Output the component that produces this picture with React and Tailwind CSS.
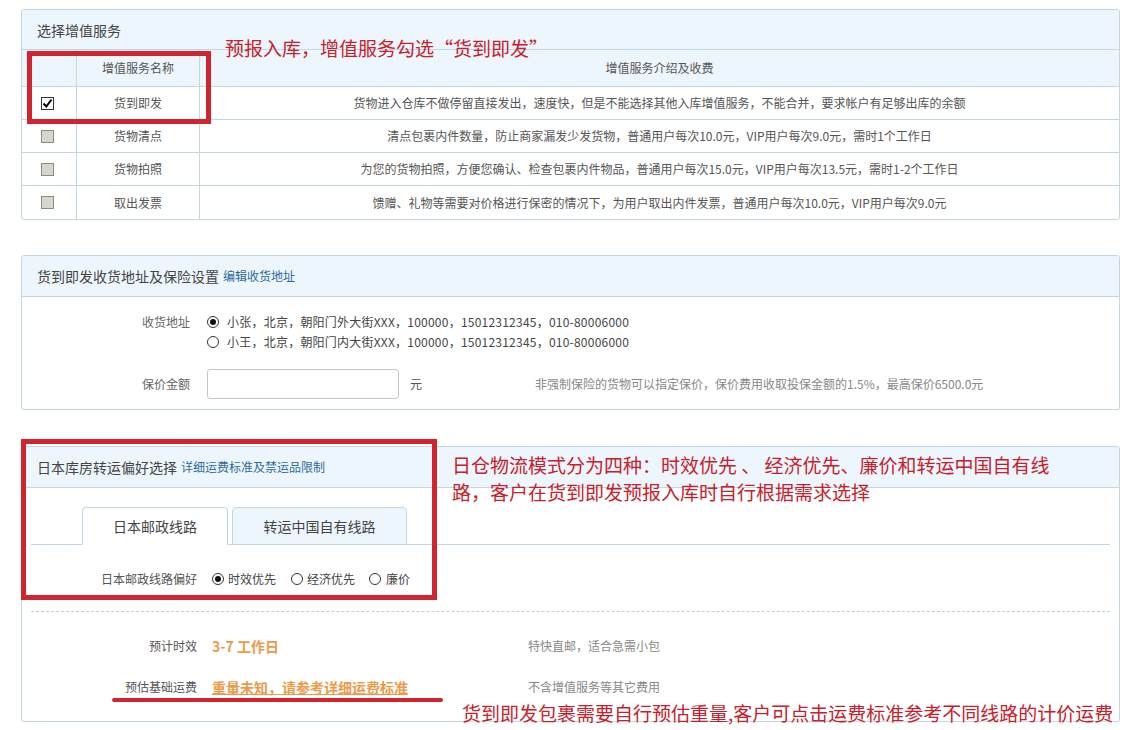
import React from "react";

const services = [
  { name: "货到即发", desc: "货物进入仓库不做停留直接发出，速度快，但是不能选择其他入库增值服务，不能合并，要求帐户有足够出库的余额", checked: true },
  { name: "货物清点", desc: "清点包裹内件数量，防止商家漏发少发货物，普通用户每次10.0元，VIP用户每次9.0元，需时1个工作日" },
  { name: "货物拍照", desc: "为您的货物拍照，方便您确认、检查包裹内件物品，普通用户每次15.0元，VIP用户每次13.5元，需时1-2个工作日" },
  { name: "取出发票", desc: "馈赠、礼物等需要对价格进行保密的情况下，为用户取出内件发票，普通用户每次10.0元，VIP用户每次9.0元" },
];

function Checkbox({ checked }) {
  if (checked) {
    return (
      <span className="flex items-center justify-center w-[13px] h-[13px] border border-[#333] bg-white">
        <svg width="11" height="11" viewBox="0 0 11 11">
          <path d="M1.5 5.5 L4.3 8.5 L9.5 1.5" fill="none" stroke="#000" strokeWidth="2" />
        </svg>
      </span>
    );
  }
  return <span className="block w-[13px] h-[13px] border border-[#8a8a8a] bg-[#d8d5d0]"></span>;
}

function Radio({ checked }) {
  return (
    <span className="flex items-center justify-center w-[12px] h-[12px] rounded-full border border-[#333] bg-white shrink-0">
      {checked && <span className="block w-[6px] h-[6px] rounded-full bg-[#111]"></span>}
    </span>
  );
}

function PanelHeader({ title, link, h }) {
  return (
    <div className={`flex items-center ${h} bg-[#eef6fd] border-b border-[#c3d6e4] pl-[15px]`}>
      <span className="text-[14px] text-[#444]">{title}</span>
      {link && <span className="ml-[4px] text-[12px] text-[#2d6aa0]">{link}</span>}
    </div>
  );
}

export default function App() {
  return (
    <div className="relative w-[1137px] h-[730px] overflow-hidden bg-white font-[family-name:'Noto_Sans_CJK_SC',sans-serif] leading-[20px]">
      <div className="pt-[9px] pl-[21px] w-[1120px]">
        {/* 增值服务 */}
        <div className="border border-[#c3d6e4] rounded-[3px] overflow-hidden">
          <PanelHeader title="选择增值服务" h="h-[40px]" />
          <div className="grid grid-cols-[55px_123px_1fr] h-[37px] bg-[#eef6fd] border-b border-[#c3d6e4] text-[12px] text-[#555]">
            <div className="border-r border-[#c3d6e4]"></div>
            <div className="border-r border-[#c3d6e4] flex items-center justify-center">增值服务名称</div>
            <div className="flex items-center justify-center">增值服务介绍及收费</div>
          </div>
          {services.map((s, i) => (
            <div
              key={i}
              className={`grid grid-cols-[55px_123px_1fr] h-[33px] text-[12px] text-[#555] ${i < services.length - 1 ? "border-b border-[#c3d6e4]" : ""}`}
            >
              <div className="border-r border-[#c3d6e4] flex justify-center pt-[10px] pr-[3px]">
                <Checkbox checked={s.checked} />
              </div>
              <div className="border-r border-[#c3d6e4] flex items-center justify-center">{s.name}</div>
              <div className="flex items-center justify-center">{s.desc}</div>
            </div>
          ))}
        </div>

        {/* 收货地址 */}
        <div className="mt-[35px] border border-[#c3d6e4] rounded-[3px] overflow-hidden">
          <PanelHeader title="货到即发收货地址及保险设置" link="编辑收货地址" h="h-[41px]" />
          <div className="pt-[15px] pb-[10px] text-[12px]">
            <div className="flex">
              <div className="w-[168px] text-right text-[#666]">收货地址</div>
              <div className="ml-[17px] text-[#444] tracking-[0.23px]">
                <div className="flex items-center h-[20px]">
                  <Radio checked />
                  <span className="ml-[8px]">小张，北京，朝阳门外大街XXX，100000，15012312345，010-80006000</span>
                </div>
                <div className="flex items-center h-[20px]">
                  <Radio />
                  <span className="ml-[8px]">小王，北京，朝阳门内大街XXX，100000，15012312345，010-80006000</span>
                </div>
              </div>
            </div>
            <div className="flex items-center mt-[17px] h-[30px]">
              <div className="w-[168px] text-right text-[#666]">保价金额</div>
              <div className="ml-[17px] w-[328px] flex items-center">
                <input className="w-[192px] h-[30px] border border-[#c6c6c6] rounded-[3px] bg-white" />
                <span className="ml-[11px] text-[#555]">元</span>
              </div>
              <div className="text-[#888]">非强制保险的货物可以指定保价，保价费用收取投保金额的1.5%，最高保价6500.0元</div>
            </div>
          </div>
        </div>

        {/* 转运偏好 */}
        <div className="mt-[36px] border border-[#c3d6e4] rounded-[3px] overflow-hidden">
          <PanelHeader title="日本库房转运偏好选择" link="详细运费标准及禁运品限制" h="h-[41px]" />
          <div className="pt-[19px] pb-[24px] text-[12px]">
            <div className="mx-[9px] flex items-end h-[38px] border-b border-[#c3d6e4] pl-[51px] gap-[4px]">
              <div className="mb-[-1px] h-[38px] w-[146px] flex items-center justify-center border border-[#c3d6e4] border-b-white bg-white rounded-t-[4px] text-[14px] text-[#444]">
                日本邮政线路
              </div>
              <div className="mb-[-1px] h-[38px] w-[175px] flex items-center justify-center border border-[#c3d6e4] bg-[#eef6fd] rounded-t-[4px] text-[14px] text-[#444]">
                转运中国自有线路
              </div>
            </div>
            <div className="flex items-center h-[20px] mt-[24px]">
              <div className="w-[175px] text-right text-[#555]">日本邮政线路偏好</div>
              <div className="ml-[15px] flex items-center text-[#444]">
                <Radio checked />
                <span className="ml-[4px]">时效优先</span>
                <span className="ml-[15px]"><Radio /></span>
                <span className="ml-[4px]">经济优先</span>
                <span className="ml-[14px]"><Radio /></span>
                <span className="ml-[5px]">廉价</span>
              </div>
            </div>
            <div className="mx-[9px] mt-[22px] border-t border-dashed border-[#b9cfdf]"></div>
            <div className="flex items-center h-[20px] mt-[24px]">
              <div className="w-[175px] text-right text-[#555]">预计时效</div>
              <div className="ml-[15px] w-[316px] text-[14px] font-bold text-[#ec9a48]">3-7 工作日</div>
              <div className="text-[#888]">特快直邮，适合急需小包</div>
            </div>
            <div className="flex items-center h-[20px] mt-[21px]">
              <div className="w-[175px] text-right text-[#555]">预估基础运费</div>
              <div className="ml-[15px] w-[316px] text-[14px] font-bold text-[#ec9a48] underline">重量未知，请参考详细运费标准</div>
              <div className="text-[#888]">不含增值服务等其它费用</div>
            </div>
          </div>
        </div>
      </div>

      {/* annotations */}
      <div className="absolute left-[27px] top-[51px] w-[184px] h-[73px] border-[5px] border-[#d0252f]"></div>
      <div className="absolute left-[225px] top-[38px] text-[19px] leading-[20px] text-[#c8202a] whitespace-nowrap">
        预报入库，增值服务勾选“货到即发”
      </div>
      <div className="absolute left-[21px] top-[439px] w-[416px] h-[161px] border-[5px] border-[#d0252f]"></div>
      <div className="absolute left-[452px] top-[451px] text-[19px] leading-[27px] text-[#c8202a] whitespace-nowrap">
        日仓物流模式分为四种：时效优先 、 经济优先、廉价和转运中国自有线
        <br />
        路，客户在货到即发预报入库时自行根据需求选择
      </div>
      <div className="absolute left-[112px] top-[698px] w-[331px] h-[4px] rounded-full bg-[#d0252f]"></div>
      <div className="absolute left-[462px] top-[703px] text-[19px] leading-[20px] text-[#c8202a] whitespace-nowrap [text-shadow:0_0_2px_#fff,0_0_2px_#fff]">
        货到即发包裹需要自行预估重量,客户可点击运费标准参考不同线路的计价运费
      </div>
    </div>
  );
}
